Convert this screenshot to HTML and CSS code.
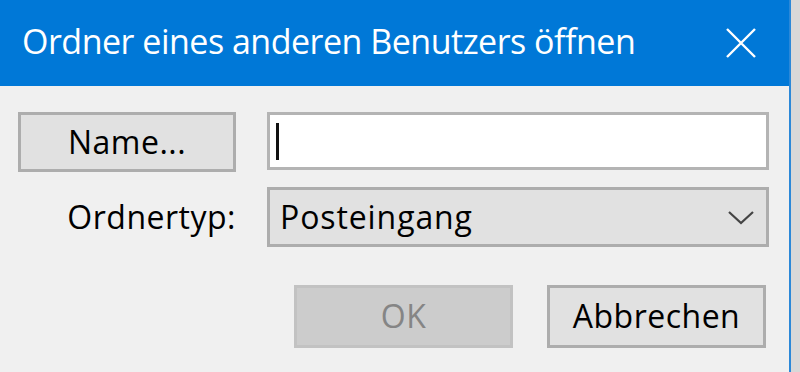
FILE: index.html
```html
<!DOCTYPE html>
<html>

<head>
    <link rel="stylesheet" href="styles.css">
</head>

<body>
    <div class="dialog">
        <div class="titlebar">
            <div class="title">Ordner eines anderen Benutzers öffnen</div>
            <div class="close">
                <svg width="32" height="32" viewBox="0 0 32 32">
                    <path d="M2 2 L30 30 M30 2 L2 30" stroke="#fff" stroke-width="2.4" fill="none" />
                </svg>
            </div>
        </div>

        <div class="content">
            <div class="form">
                <div class="btn">Name...</div>
                <div class="textbox"><span class="caret"></span></div>

                <div class="label">Ordnertyp:</div>
                <div class="select">
                    <span>Posteingang</span>
                    <svg width="26" height="14" viewBox="0 0 26 14">
                        <path d="M1 1 L13 12 L25 1" stroke="#444" stroke-width="2.2" fill="none" />
                    </svg>
                </div>
            </div>

            <div class="actions">
                <div class="btn disabled">OK</div>
                <div class="btn">Abbrechen</div>
            </div>
        </div>
    </div>
    <div class="outside"></div>
</body>

</html>
```

FILE: styles.css
```css
/* Page */
body {
    margin: 0;
    display: flex;
    height: 372px;
    overflow: hidden;
    font-family: "Open Sans", "Noto Sans", sans-serif;
    background-color: #d6d6d6;
}

/* Dialog window */
.dialog {
    width: 789px;
    background-color: #f0f0f0;
    border-right: 2px solid #2b88d8;
    display: flex;
    flex-direction: column;
}

.outside {
    flex: 1;
    background-color: #d8d8d8;
}

/* Title bar */
.titlebar {
    height: 86px;
    background-color: #0078d7;
    color: white;
    display: flex;
    align-items: center;
    padding-left: 22px;
    padding-right: 32px;
}

.title {
    flex: 1;
    font-size: 34px;
    letter-spacing: -0.5px;
    padding-bottom: 4px;
}

.close {
    display: flex;
}

/* Content */
.content {
    padding: 26px 20px 0 18px;
}

.form {
    display: grid;
    grid-template-columns: 218px 502px;
    grid-template-rows: 60px 60px;
    column-gap: 31px;
    row-gap: 15px;
}

.btn {
    box-sizing: border-box;
    display: flex;
    justify-content: center;
    align-items: center;
    background-color: #e1e1e1;
    border: 3px solid #adadad;
    font-size: 32px;
    letter-spacing: 0.5px;
    color: #000;
    padding-bottom: 2px;
}

.btn.disabled {
    background-color: #cccccc;
    border-color: #c2c2c2;
    color: #858585;
}

.textbox {
    box-sizing: border-box;
    background-color: white;
    border: 3px solid #b4b4b4;
    height: 58px;
    display: flex;
    align-items: center;
    padding-left: 6px;
}

.caret {
    width: 3px;
    height: 37px;
    background-color: #111;
}

.label {
    display: flex;
    justify-content: flex-end;
    align-items: center;
    font-size: 32px;
    letter-spacing: 0.5px;
    padding-bottom: 2px;
}

.select {
    box-sizing: border-box;
    display: flex;
    justify-content: space-between;
    align-items: center;
    background-color: #e1e1e1;
    border: 3px solid #adadad;
    padding: 0 12px 2px 10px;
    font-size: 32px;
    letter-spacing: 0.9px;
}

.select svg {
    margin-top: 4px;
}

/* Bottom buttons */
.actions {
    display: flex;
    justify-content: flex-end;
    gap: 34px;
    margin-top: 38px;
    padding-right: 3px;
}

.actions .btn {
    width: 219px;
    height: 63px;
}
```
